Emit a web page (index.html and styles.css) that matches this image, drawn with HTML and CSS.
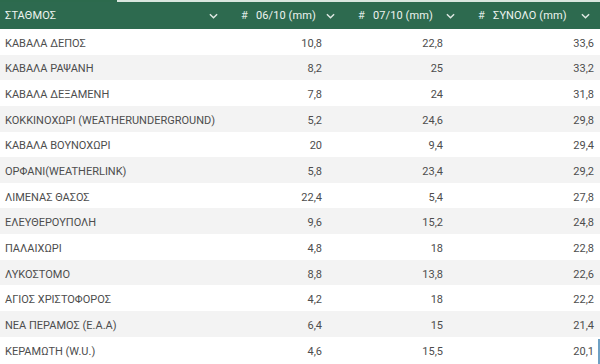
FILE: index.html
```html
<!DOCTYPE html>
<html lang="el">
<head>
<meta charset="utf-8">
<link rel="stylesheet" href="styles.css">
</head>
<body>
<div class="topstrip"><div class="tab-dark"></div><div class="tab-light"></div></div>
<table class="grid">
  <colgroup>
    <col class="c0"><col class="c1"><col class="c2"><col class="c3">
  </colgroup>
  <thead>
    <tr>
      <th><div class="hcell"><span class="lbl">ΣΤΑΘΜΟΣ</span><svg class="chev" viewBox="0 0 10 6"><path d="M1 1 L5 5 L9 1"/></svg></div></th>
      <th><div class="hcell"><span class="hash">#</span><span class="lbl">06/10 (mm)</span><svg class="chev" viewBox="0 0 10 6"><path d="M1 1 L5 5 L9 1"/></svg></div></th>
      <th><div class="hcell"><span class="hash">#</span><span class="lbl">07/10 (mm)</span><svg class="chev" viewBox="0 0 10 6"><path d="M1 1 L5 5 L9 1"/></svg></div></th>
      <th><div class="hcell"><span class="hash">#</span><span class="lbl">ΣΥΝΟΛΟ (mm)</span><svg class="chev" viewBox="0 0 10 6"><path d="M1 1 L5 5 L9 1"/></svg></div></th>
    </tr>
  </thead>
  <tbody>
    <tr><td>ΚΑΒΑΛΑ ΔΕΠΟΣ</td><td class="n n1">10,8</td><td class="n n2">22,8</td><td class="n n3">33,6</td></tr>
    <tr><td>ΚΑΒΑΛΑ ΡΑΨΑΝΗ</td><td class="n n1">8,2</td><td class="n n2">25</td><td class="n n3">33,2</td></tr>
    <tr><td>ΚΑΒΑΛΑ ΔΕΞΑΜΕΝΗ</td><td class="n n1">7,8</td><td class="n n2">24</td><td class="n n3">31,8</td></tr>
    <tr><td>ΚΟΚΚΙΝΟΧΩΡΙ (WEATHERUNDERGROUND)</td><td class="n n1">5,2</td><td class="n n2">24,6</td><td class="n n3">29,8</td></tr>
    <tr><td>ΚΑΒΑΛΑ ΒΟΥΝΟΧΩΡΙ</td><td class="n n1">20</td><td class="n n2">9,4</td><td class="n n3">29,4</td></tr>
    <tr><td>ΟΡΦΑΝΙ(WEATHERLINK)</td><td class="n n1">5,8</td><td class="n n2">23,4</td><td class="n n3">29,2</td></tr>
    <tr><td>ΛΙΜΕΝΑΣ ΘΑΣΟΣ</td><td class="n n1">22,4</td><td class="n n2">5,4</td><td class="n n3">27,8</td></tr>
    <tr><td>ΕΛΕΥΘΕΡΟΥΠΟΛΗ</td><td class="n n1">9,6</td><td class="n n2">15,2</td><td class="n n3">24,8</td></tr>
    <tr><td>ΠΑΛΑΙΧΩΡΙ</td><td class="n n1">4,8</td><td class="n n2">18</td><td class="n n3">22,8</td></tr>
    <tr><td>ΛΥΚΟΣΤΟΜΟ</td><td class="n n1">8,8</td><td class="n n2">13,8</td><td class="n n3">22,6</td></tr>
    <tr><td>ΑΓΙΟΣ ΧΡΙΣΤΟΦΟΡΟΣ</td><td class="n n1">4,2</td><td class="n n2">18</td><td class="n n3">22,2</td></tr>
    <tr><td>ΝΕΑ ΠΕΡΑΜΟΣ (Ε.Α.Α)</td><td class="n n1">6,4</td><td class="n n2">15</td><td class="n n3">21,4</td></tr>
    <tr><td>ΚΕΡΑΜΩΤΗ (W.U.)</td><td class="n n1">4,6</td><td class="n n2">15,5</td><td class="n n3">20,1<span class="scroll"></span></td></tr>
  </tbody>
</table>
</body>
</html>
```
FILE: styles.css
```css
html, body {
  margin: 0;
  padding: 0;
  background: #ffffff;
  width: 600px;
  height: 364px;
  overflow: hidden;
}
body {
  font-family: Roboto, "Noto Sans", "Liberation Sans", sans-serif;
  font-size: 11px;
  color: #4d4d4d;
}
.topstrip {
  display: flex;
  height: 2px;
}
.tab-dark {
  width: 117px;
  background: #2c6a4d;
}
.tab-light {
  flex: 1;
  background: #d9e6df;
}
.grid {
  border-collapse: collapse;
  table-layout: fixed;
  width: 600px;
}
.c0 { width: 228px; }
.c1 { width: 117px; }
.c2 { width: 120px; }
.c3 { width: 135px; }
thead th {
  background: #2d6a4f;
  color: #eef4f0;
  font-weight: 400;
  height: 27px;
  padding: 0;
  text-align: left;
}
.hcell {
  display: flex;
  align-items: center;
  height: 27px;
  padding: 0 10px 0 13px;
}
thead th:first-child .hcell { padding-left: 5px; }
.hcell .lbl {
  flex: 1;
  letter-spacing: 0.1px;
}
.hash {
  width: 15px;
  font-size: 11px;
  color: #dfe9e3;
}
.chev {
  width: 9px;
  height: 6px;
  fill: none;
  stroke: #dfe9e3;
  stroke-width: 1.6;
}
tbody td {
  height: 25.65px;
  box-sizing: border-box;
  padding: 3px 0 0 5px;
  white-space: nowrap;
  position: relative;
}
tbody tr:nth-child(even) td { background: #f3f3f3; }
.n { text-align: right; }
.n1 { padding-right: 23px; }
.n2 { padding-right: 22px; }
.n3 { padding-right: 6px; }
.scroll {
  position: absolute;
  right: 0;
  top: 2px;
  width: 2px;
  height: 26px;
  background: #6fa1c4;
}
```
